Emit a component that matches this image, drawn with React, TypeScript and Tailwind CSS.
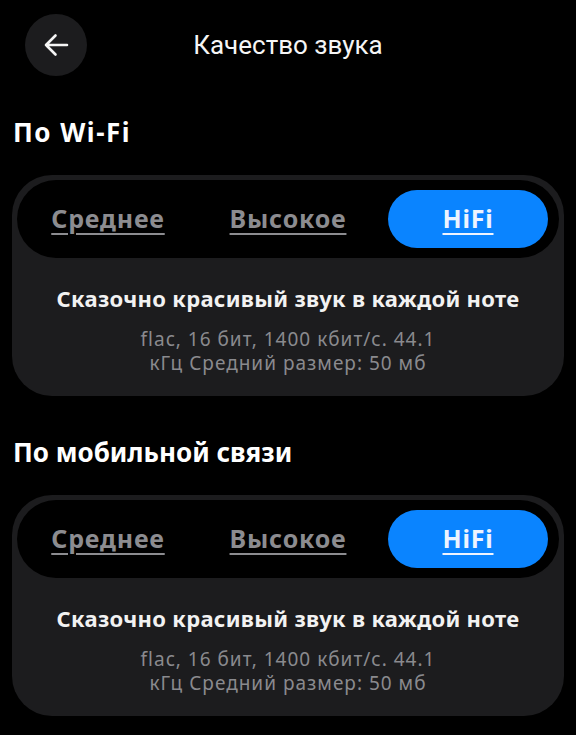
import React from "react";

const sans = { fontFamily: '"Noto Sans", "Open Sans", sans-serif' };

function Segmented() {
  const items = ["Среднее", "Высокое", "HiFi"];
  return (
    <div className="grid h-[78px] grid-cols-3 rounded-full bg-black px-px">
      {items.map((label, i) => {
        const active = i === 2;
        return (
          <div key={label} className="flex p-[10px]">
            <div
              className={
                active
                  ? "flex flex-1 items-center justify-center rounded-full bg-[#0a84ff]"
                  : "flex flex-1 items-center justify-center"
              }
            >
              <span
                className={
                  active
                    ? "text-[25px] font-bold tracking-[0.8px] text-[#eef4ff] underline decoration-[2px] underline-offset-[5px]"
                    : "text-[25px] font-bold tracking-[0.8px] text-[#8c8c90] underline decoration-[2px] underline-offset-[5px]"
                }
              >
                {label}
              </span>
            </div>
          </div>
        );
      })}
    </div>
  );
}

function QualityCard() {
  return (
    <div className="rounded-[40px] bg-[#1c1c1e] p-[5px] pb-[21px]">
      <Segmented />
      <div className="mt-[26px] text-center text-[22px] font-bold leading-[28px] tracking-[0.3px] text-[#f2f2f2]">
        Сказочно красивый звук в каждой ноте
      </div>
      <div className="mt-[15px] text-center text-[19px] leading-[24px] tracking-[1px] text-[#8a8a8e]">
        <div>flac, 16 бит, 1400 кбит/с. 44.1</div>
        <div>кГц Средний размер: 50 мб</div>
      </div>
    </div>
  );
}

export default function App() {
  return (
    <div className="min-h-[735px] bg-black px-3 pt-[14px] text-white" style={sans}>
      <div className="relative flex h-[62px] items-center justify-center">
        <button className="absolute left-[13px] top-0 flex h-[62px] w-[62px] items-center justify-center rounded-full bg-[#1c1c1e]">
          <svg width="26" height="26" viewBox="0 0 26 26" fill="none">
            <path
              d="M24 13H3M12.5 3.5 3 13l9.5 9.5"
              stroke="#f5f5f5"
              strokeWidth="2.6"
              strokeLinecap="round"
              strokeLinejoin="round"
            />
          </svg>
        </button>
        <h1
          className="text-[26px] font-normal text-[#f5f5f5]"
          style={{ fontFamily: 'Roboto, "Noto Sans", sans-serif' }}
        >
          Качество звука
        </h1>
      </div>

      <h2 className="mt-[39px] pl-px text-[26px] font-bold leading-[34px] tracking-[1.5px]">По Wi-Fi</h2>
      <div className="mt-[26px]">
        <QualityCard />
      </div>

      <h2 className="mt-[39px] pl-px text-[26px] font-bold leading-[34px]">По мобильной связи</h2>
      <div className="mt-[26px]">
        <QualityCard />
      </div>
    </div>
  );
}
